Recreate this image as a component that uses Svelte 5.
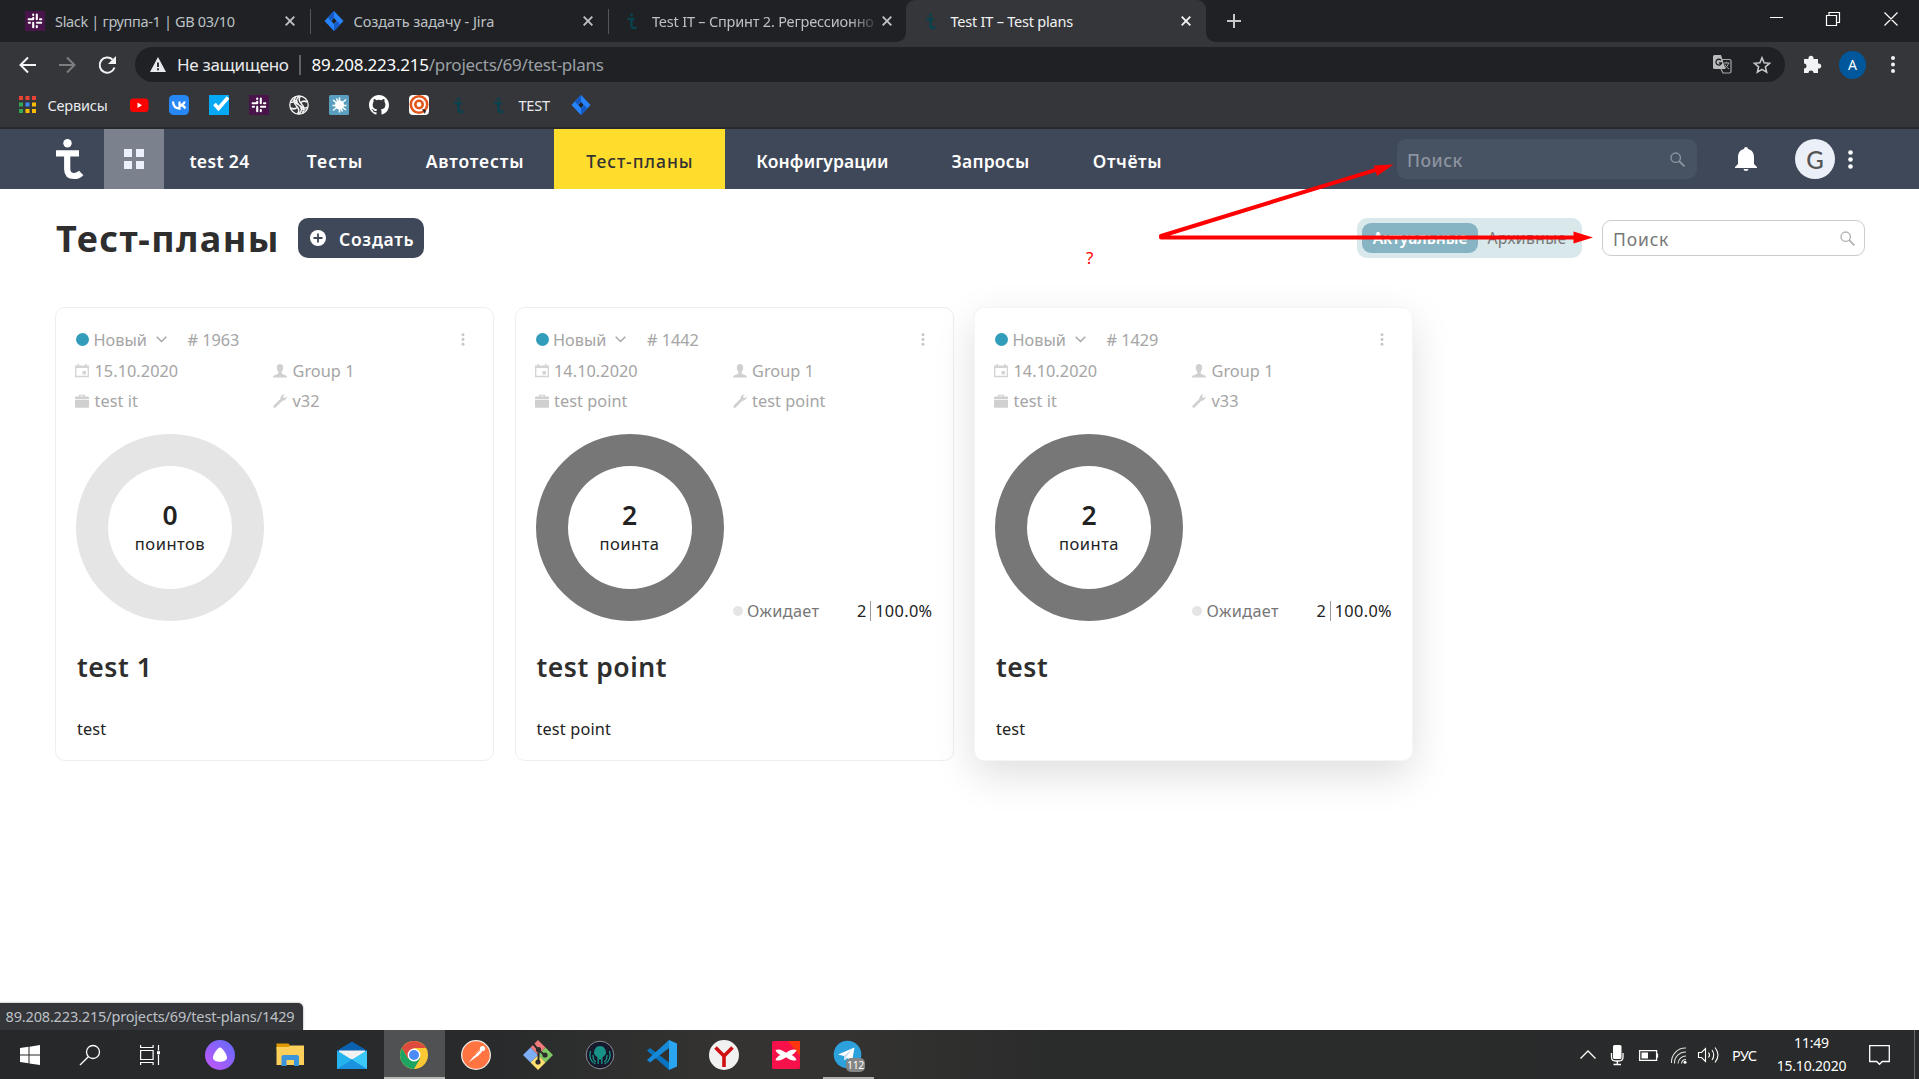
<script>
  const tabs = [
    { icon: 'slack', title: 'Slack | группа-1 | GB 03/10', track: -0.33 },
    { icon: 'jira', title: 'Создать задачу - Jira', track: -0.05 },
    { icon: 'testit', title: 'Test IT – Спринт 2. Регрессионно', track: -0.2, faded: true },
    { icon: 'testit', title: 'Test IT – Test plans', track: -0.22, active: true }
  ];
  const bookmarks = ['youtube', 'vk', 'check', 'slack', 'gpt', 'splash', 'github', 'target', 'testit', 'testit'];
  const nav = [
    { label: 'test 24', width: 110, track: 0.36 },
    { label: 'Тесты', width: 121, track: 1.1 },
    { label: 'Автотесты', width: 159, track: 0.85 },
    { label: 'Тест-планы', width: 171, track: 1, active: true },
    { label: 'Конфигурации', width: 194, track: 0.1 },
    { label: 'Запросы', width: 142, track: 0.2 },
    { label: 'Отчёты', width: 132, track: 0.62 }
  ];
  const plans = [
    { id: 1963, date: '15.10.2020', group: 'Group 1', product: 'test it', build: 'v32', points: 0, unit: 'поинтов', name: 'test 1', text: 'test' },
    { id: 1442, date: '14.10.2020', group: 'Group 1', product: 'test point', build: 'test point', points: 2, unit: 'поинта', name: 'test point', text: 'test point' },
    { id: 1429, date: '14.10.2020', group: 'Group 1', product: 'test it', build: 'v33', points: 2, unit: 'поинта', name: 'test', text: 'test', hover: true }
  ];
  const apps = ['alisa', 'explorer', 'mail', 'chrome', 'postman', 'git', 'kraken', 'vscode', 'yandex', 'xmind', 'telegram'];
</script>

{#snippet mark(name)}
  {#if name === 'slack'}
    <svg class="fav" viewBox="0 0 20 20"><rect width="20" height="20" fill="#481449" /><g stroke="#fff" stroke-width="2.100" stroke-linecap="round"><path d="M8.200 6.800v1.400M3.600 8.300h1M4 8.300h4M11.800 3.600v4.600M15 8.300h1.300M3.800 11.800h1.200M12 11.800h4.200M8.200 11.800v4.500M11.800 15v1.300M8.200 3.600v.4" /></g></svg>
  {:else if name === 'jira'}
    <svg class="fav" viewBox="0 0 20 20"><path d="M10 0l9.500 10L10 20 .5 10z" fill="#2684ff" /><path d="M10 0v6.500L6.500 10 4 6.300z" fill="#1559c5" /><path d="M10 20v-6.500l3.500-3.500 2.500 3.700z" fill="#1559c5" /><path d="M10 7l2.700 3L10 13l-2.700-3z" fill="#202124" /></svg>
  {:else if name === 'testit'}
    <svg class="fav" viewBox="0 0 20 20"><g fill="none" stroke="#07424f" stroke-width="2.300"><path d="M5.500 8h7M9.500 8v6.500q0 2.500 2.500 2.500 1.500 0 2.600-.8" /></g><circle cx="9.500" cy="4" r="1.500" fill="#07424f" /></svg>
  {:else if name === 'youtube'}
    <svg class="fav" viewBox="0 0 20 20"><rect x="1" y="3.500" width="18.500" height="13.500" rx="3.500" fill="#f00" /><path d="M8.500 7.500l4.500 2.700-4.500 2.700z" fill="#fff" /></svg>
  {:else if name === 'vk'}
    <svg class="fav" viewBox="0 0 20 20"><rect width="20" height="20" rx="4.500" fill="#2787f5" /><path d="M4 6.500c.3 4.500 2.800 7 6.500 7V6.500M15.700 6.500c-.6 2-2.600 3.500-5 3.500 2.600 0 4.600 1.200 5.500 3.500" fill="none" stroke="#fff" stroke-width="2.300" /></svg>
  {:else if name === 'check'}
    <svg class="fav" viewBox="0 0 20 20"><rect width="20" height="20" fill="#03a9f4" /><path d="M5.500 9l4 4.500L19 2.500" fill="none" stroke="#fff" stroke-width="3.600" /></svg>
  {:else if name === 'gpt'}
    <svg class="fav" viewBox="0 0 20 20"><circle cx="10" cy="10" r="9.200" fill="none" stroke="#f4f4f4" stroke-width="1.300" /><g fill="none" stroke="#f4f4f4" stroke-width="1.500"><path d="M10 1q-5 5 0 9t0 9M6.500 2q-3 5 1 9t1 8M13.500 18q3-5-1-9t-1-8M1.500 7.500Q6 6 9 9.500M18.500 12.500Q14 14 11 10.500M2 13q3.500 2 6-.5M18 7q-3.500-2-6 .5M3.500 5q3 0 5 2M16.500 15q-3 0-5-2" /></g></svg>
  {:else if name === 'splash'}
    <svg class="fav" viewBox="0 0 20 20"><rect width="20" height="20" rx="1.500" fill="#5b9fc0" /><g stroke="#fff" stroke-width="1.500"><circle cx="10.500" cy="10" r="3.800" fill="#fff" /><path d="M10.500 2.500v15M4 5l13 10M4 15.500L17 4.500M3.500 10.500h14M7.500 3.500l6 13" /></g></svg>
  {:else if name === 'github'}
    <svg class="fav" viewBox="0 0 16 16"><path fill="#fff" d="M8 0C3.580 0 0 3.580 0 8c0 3.540 2.290 6.530 5.470 7.590.4.070.55-.17.55-.38 0-.19-.01-.82-.01-1.490-2.010.37-2.530-.49-2.690-.94-.09-.23-.48-.94-.82-1.130-.28-.15-.68-.52-.01-.53.63-.01 1.080.58 1.230.82.72 1.210 1.870.87 2.330.66.07-.52.28-.87.51-1.070-1.780-.2-3.640-.89-3.640-3.950 0-.87.31-1.590.82-2.150-.08-.2-.36-1.020.08-2.120 0 0 .67-.21 2.200.82a7.600 7.600 0 014 0c1.530-1.040 2.200-.82 2.200-.82.44 1.100.16 1.920.08 2.120.51.56.82 1.270.82 2.150 0 3.070-1.870 3.750-3.650 3.950.29.25.54.73.54 1.480 0 1.070-.01 1.930-.01 2.200 0 .21.15.46.55.38A8 8 0 0016 8c0-4.420-3.580-8-8-8z" /></svg>
  {:else if name === 'target'}
    <svg class="fav" viewBox="0 0 20 20"><rect width="20" height="20" rx="4" fill="#fff" /><circle cx="10" cy="9.500" r="8.200" fill="none" stroke="#e2581c" stroke-width="2.600" /><circle cx="10" cy="9.500" r="3.700" fill="none" stroke="#e2581c" stroke-width="2.600" /><path d="M13 14l4 1-1 4z" fill="#222" /></svg>
  {/if}
{/snippet}

{#snippet lens(cls)}
  <svg class={cls} viewBox="0 0 15 15" fill="none" stroke="currentColor"><circle cx="5.700" cy="5.700" r="4.700" stroke-width="1.400" /><path d="M9.200 9.200l5.200 5.200" stroke-width="1.900" /></svg>
{/snippet}

{#snippet app(name)}
  <svg class="app-icon" viewBox="0 0 30 30">
    {#if name === 'alisa'}
      <defs><linearGradient id="al" x1="0" y1="1" x2="1" y2="0"><stop offset="0" stop-color="#c655fb" /><stop offset="1" stop-color="#5f6cfb" /></linearGradient></defs>
      <circle cx="15" cy="15" r="15" fill="url(#al)" /><path d="M15 7.500c2.500 0 7 7 7 10.200 0 2.600-3.500 4-7 4s-7-1.400-7-4c0-3.200 4.500-10.200 7-10.200z" fill="#fff" />
    {:else if name === 'explorer'}
      <path d="M1.500 3.500h12l1.500 2v4H1.500z" fill="#e09b04" /><path d="M1.500 7h12l2-1.500h13.500v19.500H1.500z" fill="#fdcf5b" /><path d="M6.500 26V17q0-2 2-2h13.500q2 0 2 2v9h-5v-6h-7.500v6z" fill="#3a95dd" />
    {:else if name === 'mail'}
      <path d="M0 10.500L15 1.500l15 9v3H0z" fill="#0a62b0" /><path d="M2 10.500h26v9H2z" fill="#f2f2f2" /><path d="M0 10.500l15 9.200L30 10.500V29H0z" fill="#25b3ee" /><path d="M30 10.500V29L15 19.700z" fill="#3cc9f7" /><path d="M0 29l15-9.300L30 29z" fill="#1b92de" />
    {:else if name === 'chrome'}
      <circle cx="15" cy="15" r="14" fill="#fbc934" /><path d="M2.900 8A14 14 0 0 1 27.100 8H15l-6.100 10.500z" fill="#dd4b3e" /><path d="M2.900 8A14 14 0 0 0 15 29l6.100-10.500L15 15l-6.100 3.500z" fill="#1da462" /><circle cx="15" cy="15" r="6.400" fill="#fff" /><circle cx="15" cy="15" r="5" fill="#4c8bf5" />
    {:else if name === 'postman'}
      <circle cx="15" cy="15" r="14.300" fill="#ff7440" stroke="#f4ece8" stroke-width="1.300" /><path d="M7.500 22.500l7.500-9 2.200 2.200zM14.500 13.500l4.500-4.200 2.200 2.200-4.200 4.500z" fill="#fff" /><circle cx="21.500" cy="8.500" r="2.600" fill="#fff" /><path d="M13 16l6-6" stroke="#ff7440" stroke-width=".8" />
    {:else if name === 'git'}
      <path d="M15 0l7.500 7.500L15 15 7.500 7.500z" fill="#f17b7b" /><path d="M22.500 7.500L30 15l-7.500 7.500L15 15z" fill="#80c864" /><path d="M15 15l7.500 7.500L15 30l-7.500-7.500z" fill="#ffe070" /><path d="M7.500 7.500L15 15l-7.500 7.500L0 15z" fill="#7eaef5" /><path d="M10 3.500L15.500 10v13M15.500 10l6 5" stroke="#2c2c2c" stroke-width="2" fill="none" /><circle cx="15.500" cy="9.500" r="2.600" fill="#2c2c2c" /><circle cx="22" cy="15" r="2.600" fill="#2c2c2c" /><circle cx="15" cy="22" r="2.600" fill="#2c2c2c" />
    {:else if name === 'kraken'}
      <circle cx="15" cy="15" r="13.800" fill="#15192b" stroke="#8b8b90" stroke-width="1" /><path d="M15 6c4 0 6 3.500 6 7 0 2-2.500 3-3.500 4.500v2h-5v-2C11.500 16 9 15 9 13c0-3.500 2-7 6-7z" fill="#179287" /><path d="M13.200 19v5M16.800 19v5M5.500 11c-2 6 .5 11 5 13M24.500 11c2 6-.5 11-5 13M8 15c0 4 1 6 3 7M22 15c0 4-1 6-3 7" stroke="#179287" stroke-width="1.300" fill="none" />
    {:else if name === 'vscode'}
      <path d="M0 10.500l3-2.500 21 16-2 6z" fill="#0b74c1" /><path d="M0 20l3 2.500L24 6.500 22 0z" fill="#1689d8" /><path d="M22 0l8 3.500v23L22 30z" fill="#2aa5f2" />
    {:else if name === 'yandex'}
      <circle cx="15" cy="15" r="15" fill="#f1f1f1" /><path d="M6.500 7.500L15 16l8.500-8.500M15 15.500V27" fill="none" stroke="#cf0f12" stroke-width="3.600" />
    {:else if name === 'xmind'}
      <rect x="1" y="1" width="28" height="28" rx="1.500" fill="#f6114a" /><path d="M17 1h12v15z" fill="#fb3610" /><path d="M4.500 10c4-1.500 7 .5 10.500 2.700 3.500-2.200 6.500-4.200 10.500-2.700-.8 2.500-3 4-5 5 2 1 4.200 2.500 5 5-4 1.500-7-.5-10.500-2.700C11.500 19.500 8.500 21.500 4.500 20c.8-2.500 3-4 5-5-2-1-4.200-2.500-5-5z" fill="#fff" />
    {:else}
      <circle cx="14.500" cy="14.500" r="13.800" fill="#2da1dc" /><path d="M5 14.500L21.500 7.500 19 21.500l-5-3.500-2.500 2.500-.5-4.500z" fill="#fff" /><path d="M11 16l8-6.500-6 7.500-1.500 3.500z" fill="#c3d9e8" />
    {/if}
  </svg>
{/snippet}

<div class="screen">
  <div class="tabs">
    {#each tabs as tab}
      <div class="tab" class:active={tab.active} style:letter-spacing="{tab.track}px">
        {@render mark(tab.icon)}
        <span class="tab-title" class:faded={tab.faded}>{tab.title}</span>
        <svg class="x" viewBox="0 0 10 10"><path d="M.7.700l8.600 8.600M9.300.700L.7 9.300" /></svg>
      </div>
    {/each}
    <svg class="plus" viewBox="0 0 14 14"><path d="M7 0v14M0 7h14" stroke="#c6c8ca" stroke-width="2" /></svg>
    <svg class="window-buttons" viewBox="0 0 128 14" fill="none" stroke="#fff"><path d="M0 5.500h13M56.500 3.500h10v10h-10zM59 3V.500h10.500v10H67M114.500.500l13 13M127.500.500l-13 13" stroke-width="1.200" /></svg>
  </div>

  <div class="toolbar">
    <svg class="arrows" viewBox="0 0 100 20" fill="none" stroke-width="2"><path d="M18 10H2.500M10 2.500L2.500 10 10 17.500" stroke="#f1f3f4" /><path d="M41 10h15.500M49 2.500l7.500 7.500-7.500 7.500" stroke="#7c7e80" /><path d="M94.500 4.500A7.600 7.600 0 1 0 96.500 12.500" stroke="#f1f3f4" /><path d="M98 1v8h-8z" fill="#f1f3f4" /></svg>
    <div class="omnibox">
      <svg class="warn" viewBox="0 0 16 15"><path d="M8 0l8 15H0z" fill="#e8eaed" /><path d="M8 5.500v4.500M8 11.300v1.900" stroke="#202124" stroke-width="1.800" /></svg>
      <span class="secure">Не защищено</span>
      <span class="divider"></span>
      <span class="url"><b>89.208.223.215</b>/projects/69/test-plans</span>
      <svg class="translate" viewBox="0 0 19 19"><path d="M8 4.500h8.500a1.500 1.500 0 0 1 1.500 1.500v10.500a1.500 1.500 0 0 1-1.500 1.500H10L8 14" fill="none" stroke="#a5a7a9" stroke-width="1.200" /><path d="M1.500 0H8l4.500 14h-11A1.500 1.500 0 0 1 0 12.500v-11A1.500 1.500 0 0 1 1.500 0z" fill="#b9bbbd" /><path d="M8 5.200A2.900 2.900 0 1 0 8.600 8H6" fill="none" stroke="#202124" stroke-width="1.300" /><path d="M11 8h5.500M13.500 6.800V8M15.500 8c-.5 2.500-2 4-3.500 5M12 9.500c1 2 2.500 3.500 4 4.500" stroke="#a5a7a9" fill="none" /></svg>
      <svg class="star" viewBox="0 0 18 18"><path d="M9 1.800l2.100 5 5.400.5-4.100 3.600 1.200 5.300L9 13.400l-4.600 2.800 1.200-5.300L1.500 7.300l5.400-.5z" fill="none" stroke="#c4c6c8" stroke-width="1.600" /></svg>
    </div>
    <svg class="puzzle" viewBox="0 0 19 19"><path d="M1 4h4.500a2.600 2.600 0 1 1 5 0H15v4.500a2.600 2.600 0 1 1 0 5V18h-4.500a2.500 2.500 0 0 0-5 0H1v-4.500a2.500 2.500 0 0 0 0-5z" fill="#f1f3f4" /></svg>
    <span class="profile">A</span>
    <svg class="kebab" viewBox="0 0 4 17" fill="#f1f3f4"><circle cx="2" cy="2" r="2" /><circle cx="2" cy="8.500" r="2" /><circle cx="2" cy="15" r="2" /></svg>
  </div>

  <div class="bookmarks">
    <svg class="grid-icon" viewBox="0 0 18 18"><g fill="#e94335"><rect width="4" height="4" /><rect x="6.500" width="4" height="4" /><rect x="13" width="4" height="4" /></g><g><rect y="6.500" width="4" height="4" fill="#34a853" /><rect x="6.500" y="6.500" width="4" height="4" fill="#4285f4" /><rect x="13" y="6.500" width="4" height="4" fill="#fbbc05" /></g><g><rect y="13" width="4" height="4" fill="#34a853" /><rect x="6.500" y="13" width="4" height="4" fill="#fbbc05" /><rect x="13" y="13" width="4" height="4" fill="#fbbc05" /></g></svg>
    <span class="services">Сервисы</span>
    {#each bookmarks as b}{@render mark(b)}{/each}
    <span class="folder">TEST</span>
    {@render mark('jira')}
  </div>

  <header>
    <svg class="logo" viewBox="0 0 27 40"><circle cx="11.500" cy="4.200" r="4.200" fill="#fff" /><path d="M0 14.300h23M11.200 14v16q0 7 7 7 4 0 7-3" fill="none" stroke="#fff" stroke-width="6.200" /></svg>
    <div class="tile"><i></i><i></i><i></i><i></i></div>
    <nav>
      {#each nav as item}
        <a class:active={item.active} style:width="{item.width}px" style:letter-spacing="{item.track}px">{item.label}</a>
      {/each}
    </nav>
    <div class="search dark"><span>Поиск</span>{@render lens('lens')}</div>
    <svg class="bell" viewBox="0 0 22 24" fill="#fff"><path d="M11 0a2 2 0 0 1 2 2c4.500 1 6 4.500 6 8.500V17l3 3v1H0v-1l3-3v-6.500C3 6.500 4.500 3 9 2a2 2 0 0 1 2-2zM8.500 22h5a2.500 2 0 0 1-5 0z" /></svg>
    <span class="user">G</span>
    <svg class="user-menu" viewBox="0 0 5 19" fill="#fff"><circle cx="2.500" cy="2.500" r="2.300" /><circle cx="2.500" cy="9.500" r="2.300" /><circle cx="2.500" cy="16.500" r="2.300" /></svg>
  </header>

  <main>
    <div class="heading">
      <h1>Тест-планы</h1>
      <button class="create">
        <svg viewBox="0 0 16 16"><circle cx="8" cy="8" r="8" fill="#fff" /><path d="M8 3.500v9M3.500 8h9" stroke="#3f4859" stroke-width="1.800" /></svg>
        Создать
      </button>
      <div class="toggle"><span class="on">Актуальные</span><span class="off">Архивные</span></div>
      <div class="search light"><span>Поиск</span>{@render lens('lens')}</div>
    </div>

    <div class="cards">
      {#each plans as plan}
        <article class:hover={plan.hover}>
          <div class="status">
            <i class="dot"></i><span>Новый</span>
            <svg class="chevron" viewBox="0 0 11 7"><path d="M.7.800l4.800 4.800L10.300.800" fill="none" stroke="#a5a5a5" stroke-width="1.400" /></svg>
            <span># {plan.id}</span>
            <svg class="more" viewBox="0 0 4 13" fill="#c6c6c6"><circle cx="2" cy="1.700" r="1.450" /><circle cx="2" cy="6.500" r="1.450" /><circle cx="2" cy="11.300" r="1.450" /></svg>
          </div>
          <div class="facts">
            <span><svg viewBox="0 0 14 14"><path d="M.7 3v9.500h12.600V3z" fill="none" stroke="#d4d4d4" stroke-width="1.300" /><path d="M0 1.500h14V4H0zM2.500 0h1.500v3H2.500zM10 0h1.500v3H10zM7.500 7h3.500v3.500H7.500z" fill="#d4d4d4" /></svg>{plan.date}</span>
            <span><svg viewBox="0 0 14 14"><path d="M7 0c2.200 0 3.200 1.500 3.200 3.800C10.200 6 9.300 7 8.700 7.700v2L13 11.500q1 .5 1 2H0q0-1.500 1-2l4.300-1.800v-2C4.700 7 3.800 6 3.800 3.800 3.800 1.500 4.800 0 7 0z" fill="#d0d0d0" /></svg>{plan.group}</span>
            <span><svg viewBox="0 0 14 14"><path d="M4 2.500V.700h6v1.800h3q1 0 1 1V5H0V3.500q0-1 1-1zM5.200 2.500h3.600v-.8H5.200zM0 5.700h14V13q0 .7-.7.700H.7Q0 13.700 0 13z" fill="#d0d0d0" fill-rule="evenodd" /></svg>{plan.product}</span>
            <span><svg viewBox="0 0 14 14"><path d="M1.700 12.500L9 5.300" stroke="#d0d0d0" stroke-width="2.700" stroke-linecap="round" /><path d="M11.800.300L9.800 2.600l1.700 1.700 2.300-2A4 4 0 0 1 8 6.200 4 4 0 0 1 11.800.300z" fill="#d0d0d0" /></svg>{plan.build}</span>
          </div>
          <div class="chart">
            <div class="donut" class:filled={plan.points > 0}><b>{plan.points}</b><span>{plan.unit}</span></div>
            {#if plan.points}
              <div class="legend"><i></i><span class="wait">Ожидает</span><span class="count">{plan.points}</span><span class="share">100.0%</span></div>
            {/if}
          </div>
          <h2>{plan.name}</h2>
          <p>{plan.text}</p>
        </article>
      {/each}
    </div>
  </main>

  <div class="bubble">89.208.223.215/projects/69/test-plans/1429</div>

  <footer>
    <svg class="system" viewBox="0 0 120 20"><path d="M0 3l8.500-1.200v7.700H0zM9.500 1.700L20 0v9.500H9.500zM0 10.500h8.500v7.700L0 17zM9.500 10.500H20V20L9.500 18.400z" fill="#fff" /><g fill="none" stroke="#fff" stroke-width="1.300"><circle cx="73" cy="7" r="6.500" /><path d="M68.300 11.700L60 20" /></g></svg>
    <svg class="taskview" viewBox="0 0 21 20" fill="none" stroke="#fff" stroke-width="1.200"><path d="M.6 0v2.500h12.500V0M.6 20v-2.500h12.500V20M.6 5.500h12.500v9H.6zM18.500 0v5.500M18.500 9.500V20" /><path d="M17 6.200h3v3h-3z" fill="#fff" stroke="none" /></svg>
    <div class="apps">
      {#each apps as name}
        <div class="slot {name}">
          {@render app(name)}
          {#if name === 'telegram'}<span class="badge">112</span>{/if}
        </div>
      {/each}
    </div>
    <svg class="tray" viewBox="0 0 140 20" fill="none" stroke="#fff" stroke-width="1.300">
      <path d="M.5 13.500L8 6l7.500 7.500" />
      <rect x="33" y="0" width="8.500" height="14" rx="1.500" fill="#fff" stroke="none" /><path d="M31.500 8v4q0 4 4 4h3.500q4 0 4-4V8M37.300 16v3.500M33.500 19.500h7.500" />
      <path d="M59.600 5.600h17v9.800h-17zM77.500 8.500v4" /><path d="M61.500 7.500h6.500v6h-6.500z" fill="#fff" stroke="none" />
      <g stroke-width="1.100" stroke="#ddd"><path d="M91.500 18A14 14 0 0 1 106 3M94.500 18.500A11 11 0 0 1 106 7M98 18.500A8 8 0 0 1 106 11M101.500 18.500A4.500 4.500 0 0 1 106 14.500" /></g><circle cx="105" cy="17.200" r="1.500" fill="#fff" stroke="none" />
      <path d="M118.500 7.500h3l4-4v13l-4-4h-3zM128.500 7.500q2 2.500 0 5M132 5q3.500 5 0 10M135 2.500q6 7.500 0 15" stroke-width="1.100" />
    </svg>
    <span class="lang">РУС</span>
    <div class="clock"><span>11:49</span><span>15.10.2020</span></div>
    <svg class="notes" viewBox="0 0 21 20" fill="none" stroke="#fff" stroke-width="1.300"><path d="M.7.700h19.600v15.800h-7L10.500 19.300 7.700 16.500h-7z" /></svg>
    <i class="peek"></i>
  </footer>

  <svg class="pointers" viewBox="0 0 440 110" stroke="#f00" fill="#f00"><path d="M11 86L226 19.800M11 87.500h415" stroke-width="4" fill="none" stroke-linecap="round" /><path d="M243.500 14.500l-16.500 11.500-3.300-10.600zM443 87.500l-19.500 6v-12z" stroke="none" /></svg>
  <span class="question">?</span>
</div>

<style>
  :global(body) { margin: 0; overflow: hidden; }
  .screen { position: relative; display: flex; flex-direction: column; width: 1919px; height: 1079px; overflow: hidden; background: #fff; font-family: "Noto Sans", "Open Sans", sans-serif; color: #2e2e2e; }
  .screen * { box-sizing: border-box; }
  svg { display: block; flex: none; overflow: visible; }
  .fav { width: 20px; height: 20px; }

  .tabs { display: flex; align-items: center; height: 42px; background: #202124; padding-left: 11px; }
  .tab { display: flex; align-items: center; width: 298.500px; height: 42px; padding: 0 14px; position: relative; font-size: 14.500px; color: #bdc1c6; }
  .tab:nth-child(-n + 2)::after { content: ""; position: absolute; right: -1px; top: 9px; width: 1px; height: 25px; background: #54565a; }
  .tab.active { width: 300px; margin-left: -1px; padding-left: 15px; background: #35363a; border-radius: 9px 9px 0 0; color: #f1f3f4; }
  .tab.active::before, .tab.active::after { content: ""; position: absolute; bottom: 0; width: 9px; height: 9px; }
  .tab.active::before { left: -9px; background: radial-gradient(circle at 0 0, transparent 8.500px, #35363a 9px); }
  .tab.active::after { right: -9px; background: radial-gradient(circle at 100% 0, transparent 8.500px, #35363a 9px); }
  .tab-title { flex: 1; margin-left: 10px; white-space: nowrap; }
  .tab-title.faded { mask-image: linear-gradient(90deg, #000 86%, transparent 99%); }
  .x { width: 10px; height: 10px; stroke: currentColor; stroke-width: 1.900; margin-right: 1px; }
  .plus { width: 14px; height: 14px; margin-left: 21px; }
  .window-buttons { width: 128px; height: 14px; margin-left: auto; margin-right: 21px; margin-top: -5px; }

  .toolbar { display: flex; align-items: center; height: 45px; background: #35363a; padding-left: 18px; }
  .arrows { width: 100px; height: 20px; }
  .omnibox { display: flex; align-items: center; width: 1650px; height: 35px; margin-left: 17px; padding: 0 14px 0 15px; border-radius: 18px; background: #202124; font-size: 17px; }
  .warn { width: 16px; height: 15px; margin-right: 11px; }
  .secure { width: 122px; color: #e8eaed; letter-spacing: -0.32px; white-space: nowrap; }
  .divider { width: 1.500px; height: 20px; background: #5f6368; margin-right: 11px; }
  .url { flex: 1; color: #9aa0a6; letter-spacing: -0.25px; }
  .url b { color: #fff; font-weight: 400; }
  .translate { width: 19px; height: 19px; margin-right: 21px; }
  .star { width: 18px; height: 18px; }
  .puzzle { width: 19px; height: 19px; margin-left: 18px; }
  .profile { display: grid; place-items: center; width: 27px; height: 28px; margin-left: 17px; border-radius: 50%; background: #01579b; color: #fff; font-size: 14px; }
  .kebab { width: 4px; height: 17px; margin-left: 24.500px; }

  .bookmarks { display: flex; align-items: center; height: 42px; padding: 0 0 5px 19px; gap: 20px; background: #35363a; border-bottom: 2px solid #28292b; color: #e8eaed; font-size: 14.500px; letter-spacing: -0.2px; }
  .grid-icon { width: 18px; height: 18px; margin-right: -9.500px; }
  .services { width: 61px; }
  .folder { width: 32px; margin-left: -10px; }

  header { display: flex; align-items: center; height: 60px; background: #3f4859; padding-left: 56px; }
  .logo { width: 27px; height: 40px; }
  .tile { display: grid; grid-template-columns: 8px 8px; gap: 4px; place-content: center; width: 60px; height: 60px; margin-left: 21px; background: #7b828e; }
  .tile i { width: 8px; height: 8px; background: #ebf0fa; }
  nav { display: flex; width: 1233px; }
  nav a { display: grid; place-items: center; height: 60px; padding: 3px 0 0 1px; color: #fff; font-size: 17.500px; font-weight: 600; white-space: nowrap; }
  nav a.active { background: #ffdd2d; color: #333; font-weight: 500; }
  .search { display: flex; align-items: center; justify-content: space-between; font-size: 17.500px; letter-spacing: 0.85px; }
  .lens { width: 15px; height: 15px; }
  .dark { width: 300px; height: 40px; padding: 0 12px 0 10px; border-radius: 9px; background: #475263; color: #8d94a0; font-weight: 500; }
  .dark span { padding-top: 1px; letter-spacing: 0.5px; }
  .bell { width: 22px; height: 24px; margin-left: 38px; }
  .user { display: grid; place-items: center; width: 40px; height: 40px; margin-left: 38px; border-radius: 50%; background: #ebeff8; color: #555; font: 500 24px Lato, sans-serif; }
  .user-menu { width: 5px; height: 19px; margin-left: 12.500px; }

  main { flex: 1; padding: 29px 54px 0 55px; }
  .heading { display: flex; align-items: center; height: 40px; }
  h1 { width: 243px; margin: 0; padding: 2px 0 0 1px; font-size: 36px; line-height: 40px; font-weight: 700; letter-spacing: 1.400px; white-space: nowrap; }
  .create { display: flex; align-items: center; gap: 13px; width: 126px; height: 40px; padding: 2px 0 0 12px; border: 0; border-radius: 10px; background: #3f4859; color: #fff; font: 600 17.500px "Noto Sans", sans-serif; letter-spacing: 0.7px; }
  .create svg { width: 16px; height: 16px; margin-top: -2px; }
  .toggle { display: flex; align-items: center; width: 225px; height: 40px; margin-left: auto; padding-left: 5px; border-radius: 10px; background: #d9e8eb; font-size: 15.600px; }
  .on { display: grid; place-items: center; width: 116px; height: 30px; border-radius: 9px; background: #87b4c2; color: #fff; font-weight: 600; }
  .off { margin-left: 9.500px; color: #777; letter-spacing: 0.42px; }
  .light { width: 263px; height: 36px; margin-left: 20px; padding: 0 9px 0 10px; border: 1px solid #ccc; border-radius: 9px; color: #777; }
  .light span { padding-top: 1px; }
  .light .lens { color: #b4b4b4; }

  .cards { display: grid; grid-template-columns: repeat(3, 439px); gap: 20.500px; margin-top: 49px; }
  article { height: 454px; padding: 16px 20px 0; border: 1px solid #eee; border-radius: 10px; font-size: 16.300px; }
  article.hover { border-color: #f5f5f5; background: #fff; box-shadow: 0 14px 40px rgba(0, 0, 0, 0.13); }
  .status { display: flex; align-items: center; height: 31px; color: #a5a5a5; }
  .dot { width: 13px; height: 13px; margin-right: 4.500px; border-radius: 50%; background: #319dba; }
  .chevron { width: 11px; height: 7px; margin: 0 20.500px 0 9px; }
  .more { width: 4px; height: 13px; margin: 0 8px 0 auto; }
  .facts { display: grid; grid-template-columns: 198px 1fr; grid-template-rows: 31px 29px; margin-left: -1px; color: #a5a5a5; }
  .facts span { display: flex; align-items: center; gap: 5.500px; letter-spacing: 0.05px; }
  .facts svg { width: 14px; height: 14px; }
  .chart { display: flex; align-items: flex-end; margin-top: 18.500px; }
  .donut { display: flex; flex-direction: column; align-items: center; justify-content: center; width: 188px; height: 187.500px; border: 32.500px solid #e5e5e5; border-radius: 50%; color: #222; }
  .donut.filled { border-color: #777; }
  .donut b { margin-top: 2px; font-size: 26.500px; line-height: 30px; font-weight: 600; }
  .donut span { font-size: 16.500px; line-height: 27px; letter-spacing: 0.5px; }
  .legend { display: flex; align-items: center; flex: 1; height: 20px; margin-left: 9px; color: #222; letter-spacing: 0.36px; }
  .legend i { width: 10px; height: 10px; margin-right: 4.500px; border-radius: 50%; background: #e5e5e5; }
  .wait { color: #777; }
  .count { margin-left: auto; padding-right: 3.500px; line-height: 20px; border-right: 1.500px solid #999; }
  .share { padding-left: 4px; }
  h2 { margin: 28px 0 0; padding-left: 1px; font-size: 26.500px; line-height: 36px; font-weight: 600; letter-spacing: 0.55px; }
  p { margin: 32px 0 0; padding-left: 1px; line-height: 24px; color: #222; letter-spacing: 0.15px; }

  .bubble { position: absolute; left: 0; bottom: 49px; width: 303px; height: 27px; padding-left: 5.500px; border-top-right-radius: 5px; background: #35363a; box-shadow: 0 0 2px rgba(0, 0, 0, 0.5); color: #bdc1c6; font-size: 14.500px; line-height: 27px; letter-spacing: -0.16px; white-space: nowrap; }

  footer { position: relative; display: flex; align-items: center; height: 49px; padding-left: 20px; background: linear-gradient(90deg, #26282a, #282a2b 25%, #343331 38%, #343331 44%, #2a2b2b 55%, #292a2b); color: #fff; }
  .system { width: 120px; height: 20px; }
  .taskview { width: 21px; height: 20px; }
  .apps { display: flex; height: 49px; margin-left: 28px; }
  .slot { position: relative; display: grid; place-items: center; width: 62px; height: 49px; }
  .slot.alisa { margin-right: 8px; }
  .slot.chrome { background: linear-gradient(#4f5152 47px, #b8b8b6 47px) 1px 0 / 61px 49px no-repeat; }
  .slot.telegram { background: linear-gradient(#b1aeac, #b1aeac) 50% 100% / 51px 2px no-repeat; }
  .app-icon { width: 30px; height: 30px; }
  .badge { position: absolute; left: 29px; top: 28px; width: 19px; height: 14px; border-radius: 5px; background: #858585; color: #fff; font-size: 10.500px; line-height: 14px; text-align: center; letter-spacing: -0.4px; }
  .tray { width: 140px; height: 20px; margin-left: 701px; }
  .lang { width: 30px; margin-left: 12px; font-size: 14.500px; letter-spacing: -0.5px; }
  .clock { display: flex; flex-direction: column; align-items: center; width: 72px; margin-left: 13.500px; font-size: 14px; line-height: 22.500px; letter-spacing: -0.2px; }
  .notes { width: 21px; height: 20px; margin-left: 21px; }
  .peek { width: 1px; height: 49px; margin-left: 24px; background: #67696a; }

  .pointers { position: absolute; left: 1150px; top: 150px; width: 440px; height: 110px; }
  .question { position: absolute; left: 1086px; top: 247px; color: #f00; font-size: 17px; line-height: 22px; font-weight: 400; }
</style>
